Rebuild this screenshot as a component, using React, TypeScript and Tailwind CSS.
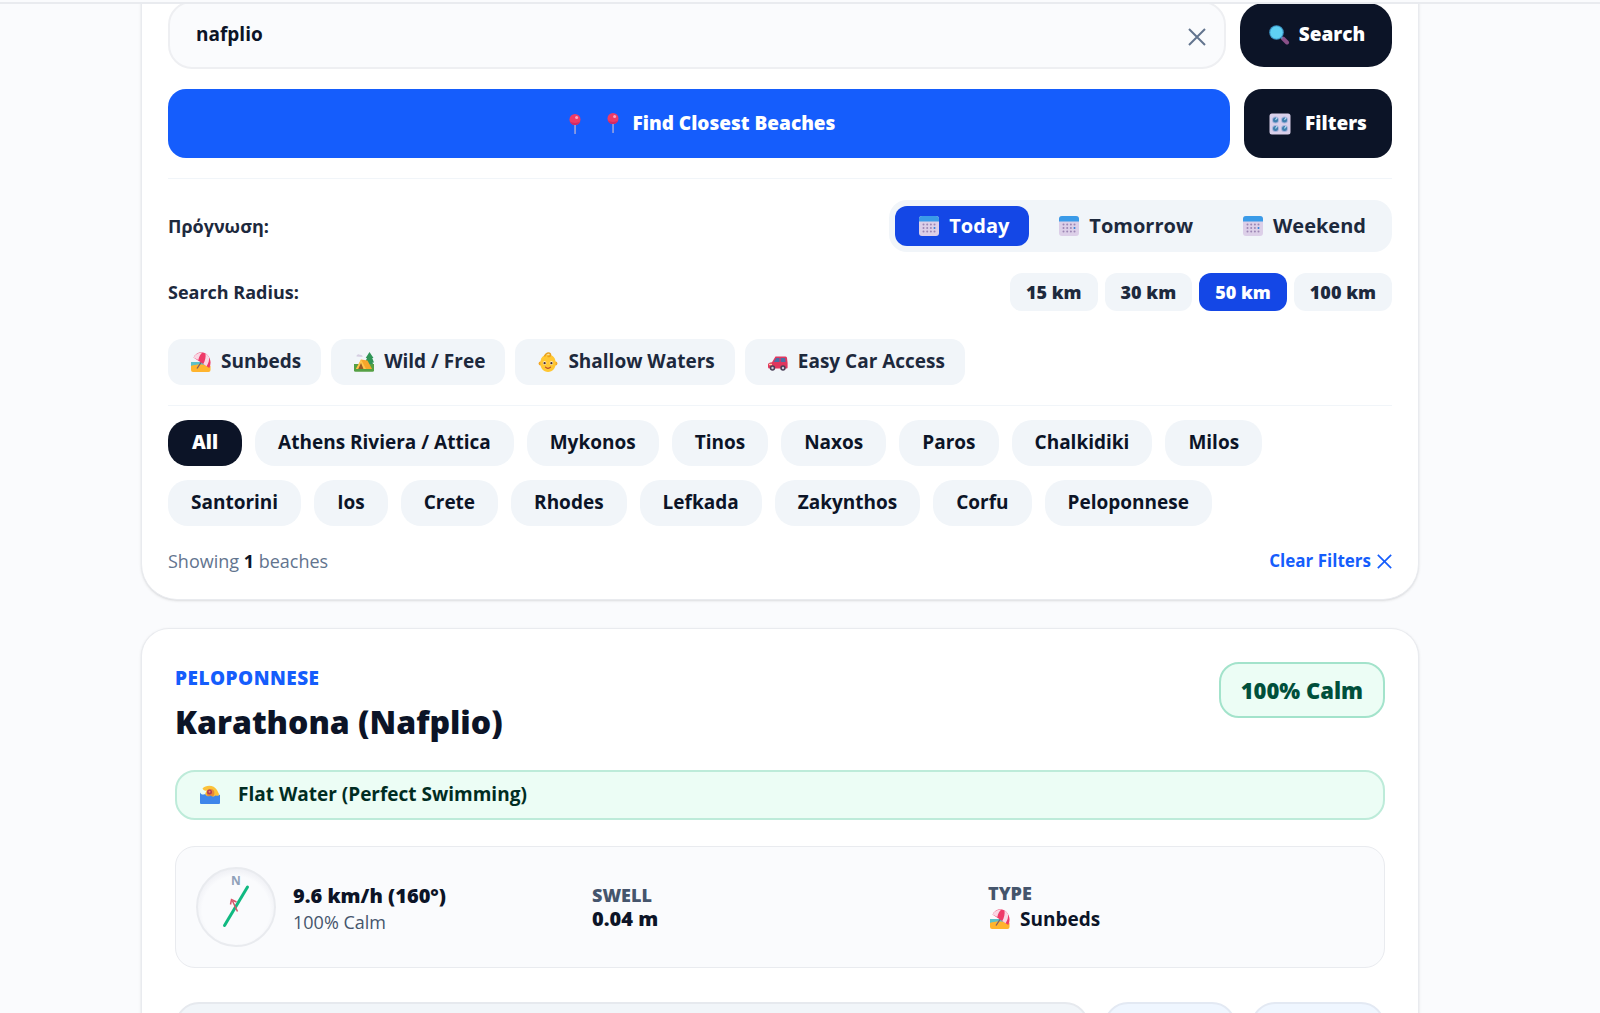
import React, { useState } from 'react';

const days = ['Today', 'Tomorrow', 'Weekend'];
const radii = [15, 30, 50, 100];
const regions = ['All', 'Athens Riviera / Attica', 'Mykonos', 'Tinos', 'Naxos', 'Paros', 'Chalkidiki', 'Milos', 'Santorini', 'Ios', 'Crete', 'Rhodes', 'Lefkada', 'Zakynthos', 'Corfu', 'Peloponnese'];

const PinIcon = () => <svg viewBox="0 0 20 20" className="h-5 w-6 shrink-0">
  <rect x="9.4" y="9" width="1.3" height="11" rx="0.6" fill="#b9b4d6" />
  <circle cx="10" cy="5.5" r="5.5" fill="#ee3a66" />
  <path d="M4.800 7.200a5.500 5.500 0 0 0 10.400 0c-2.600 2.200-7.600 2.300-10.400 0z" fill="#cf2a66" />
  <circle cx="11.600" cy="3.600" r="1.500" fill="#ffa3bd" />
</svg>;

const SearchIcon = () => <svg viewBox="0 0 20 20" className="h-5 w-6 shrink-0">
  <path d="M14 13.500l4 4" stroke="#8a5088" strokeWidth="4" strokeLinecap="round" />
  <path d="M11 11l2.500 2.500" stroke="#6b7fa8" strokeWidth="2" />
  <circle cx="7.500" cy="7.500" r="7.300" fill="#3b93c4" />
  <circle cx="7.500" cy="7.500" r="6.200" fill="#5fd0f3" />
</svg>;

const KnobsIcon = () => <svg viewBox="0 0 22 22" className="h-[22px] w-[22px] shrink-0">
  <rect x="0.500" y="0.500" width="21" height="21" rx="2.500" fill="#d9d0ea" />
  {[6.500, 15.500].map(x => [7, 15.500].map(y => <g key={`${x}-${y}`}>
    <circle cx={x} cy={y} r="3.500" fill="#a9b2dc" />
    <circle cx={x} cy={y} r="2.500" fill="#3f7fae" />
    <path d={`M${x} ${y}l1.500-2.400`} stroke="#b9e0f5" strokeWidth="1.100" />
  </g>))}
</svg>;

const CalendarIcon = () => <svg viewBox="0 0 20 20" className="h-5 w-6 shrink-0">
  <rect width="20" height="20" rx="3" fill="#dccfe8" />
  <path d="M0 5.500V3a3 3 0 0 1 3-3h14a3 3 0 0 1 3 3v2.500z" fill="#3a9be8" />
  {[8.500, 12, 15.500].map(y => [4.500, 8.200, 11.900, 15.500].map(x => <circle key={`${x}-${y}`} cx={x} cy={y} r="1" fill={x > 15 && y === 12 ? '#2f7fd8' : '#9c86b4'} />))}
</svg>;

const UmbrellaIcon = () => <svg viewBox="0 0 20 20" className="h-5 w-6 shrink-0">
  <path d="M0 10h18v4H0z" fill="#5cc0c9" />
  <path d="M0 14c5-2 12-2 19.500 0v4a2 2 0 0 1-2 2H2a2 2 0 0 1-2-2z" fill="#ffb42e" />
  <path d="M6 16.500l6-9" stroke="#7a5a6b" strokeWidth="1.300" />
  <path d="M2.500 5.500C5.500 0 12-1.500 16.500 3c3.500 4 3.800 8.500 1.800 13z" fill="#ee3a68" />
  <path d="M2.500 5.500C4.500 2 8 .300 11.500.500c-2 1.500-3.500 4-4.200 7.500z" fill="#f9d7e4" />
  <path d="M12.300 12C14.200 8.500 15 5 14.500 1.500c1.500.700 2.500 2 3.500 3.500.500 3-.500 6.500-2.500 9.300z" fill="#f9d7e4" />
</svg>;

const CampingIcon = () => <svg viewBox="0 0 20 20" className="h-5 w-6 shrink-0">
  <path d="M15.500 0l4 6h-1.300l1.800 4.500h-1.500L20 15h-9l1.500-4.500H11L13 6h-1.300z" fill="#2f9556" />
  <path d="M2.500 4.500a2 2 0 0 1 3.500-1.500 1.800 1.800 0 0 1 2.500 2z" fill="#d6cfe2" />
  <path d="M0 12h20v6.300a1.500 1.500 0 0 1-1.500 1.500h-17A1.500 1.500 0 0 1 0 18.300z" fill="#55a044" />
  <path d="M7 7.500l6.500 1L18 17H2z" fill="#f7a62b" />
  <path d="M7 7.500L2 17h10z" fill="#ffc64d" />
  <path d="M7 11l-2.800 6h5.300z" fill="#9a5a26" />
</svg>;

const BabyIcon = () => <svg viewBox="0 0 20 20" className="h-5 w-6 shrink-0">
  <circle cx="2.500" cy="11.500" r="1.900" fill="#f5a623" />
  <circle cx="17.500" cy="11.500" r="1.900" fill="#f5a623" />
  <path d="M10 2.600c5 0 7.700 3.700 7.700 8.700S14.500 20 10 20s-7.700-3.700-7.700-8.700S5 2.600 10 2.600z" fill="#ffc733" />
  <path d="M6.500 4.500C7.500 1 11 0 12.300 2c.800 1.800-1 3-2.800 2.300" fill="none" stroke="#eaa21d" strokeWidth="1.600" />
  <circle cx="6.600" cy="11" r="1.700" fill="#fff" /><circle cx="13.400" cy="11" r="1.700" fill="#fff" />
  <circle cx="6.600" cy="11.100" r="1.200" fill="#4b2f28" /><circle cx="13.400" cy="11.100" r="1.200" fill="#4b2f28" />
  <path d="M7.500 15.200c1.500 1.500 3.500 1.500 5 0" fill="none" stroke="#b5472b" strokeWidth="1.200" strokeLinecap="round" />
</svg>;

const CarIcon = () => <svg viewBox="0 0 20 20" className="h-5 w-6 shrink-0">
  <path d="M7.500 4.500h10a1.500 1.500 0 0 1 1.500 1.500l.600 5v4.500a1 1 0 0 1-1 1H1.500A1.500 1.500 0 0 1 0 15v-2.500c0-1.200 1.500-1.800 4-2.200z" fill="#e0365f" />
  <path d="M8.200 6h3.300v4H5.600zM12.700 6h4.300l.700 4h-5z" fill="#4c6fa5" />
  <path d="M1 12.500h3" stroke="#ffd3a0" strokeWidth="1.400" />
  <circle cx="4.500" cy="16" r="2.700" fill="#4a3f57" /><circle cx="4.500" cy="16" r="1.200" fill="#cfc6dc" />
  <circle cx="15" cy="16" r="2.700" fill="#4a3f57" /><circle cx="15" cy="16" r="1.200" fill="#cfc6dc" />
</svg>;

const SwimmerIcon = () => <svg viewBox="0 0 20 20" className="h-5 w-6 shrink-0">
  <path d="M2.500 3.500C6-.500 14-.500 17 5l2 4-1 5H4.500c0-4 .500-6 2.500-8.500-1.500.500-3.500 0-4.500-2z" fill="#fbc23a" />
  <circle cx="10.500" cy="8" r="3.900" fill="#e88b36" />
  <circle cx="9.500" cy="7" r="2.500" fill="#b03a5b" />
  <circle cx="9.500" cy="6.800" r="1" fill="#ee8f5a" />
  <path d="M0 7.500c1.500 2.500 3.500 2.500 5 1.500 1.500 2.500 4 3 5.500 1.500 1.500 1.500 3.500 1.500 5 0 1.500.500 3 .500 4.500-1V18a1 1 0 0 1-1 1H1a1 1 0 0 1-1-1z" fill="#3f86ea" />
</svg>;

const CrossIcon = ({ className }: { className: string }) => <svg viewBox="0 0 18 18" className={className} fill="none" stroke="currentColor" strokeWidth="2">
  <path d="M1 1l16 16M17 1L1 17" />
</svg>;

const Compass = () => <svg viewBox="0 0 80 80" className="h-20 w-20 shrink-0">
  <defs>
    <radialGradient id="dial" cx="50%" cy="54%" r="54%">
      <stop offset="80%" stopColor="#fafbfd" />
      <stop offset="100%" stopColor="#eeeff4" />
    </radialGradient>
  </defs>
  <circle cx="40" cy="40" r="39" fill="url(#dial)" stroke="#e9ebef" strokeWidth="2" />
  <text x="40" y="18" textAnchor="middle" fontSize="12" fontWeight="700" fill="#90a1b9">N</text>
  <path d="M28.500 58.500L51.500 20" stroke="#10b981" strokeWidth="3" strokeLinecap="round" />
  <path d="M41.500 44.500L36.500 34M34.500 37.500l1-5 5 2.500" stroke="#d9566a" strokeWidth="1.500" fill="none" />
</svg>;

const features = [
  { label: 'Sunbeds', Icon: UmbrellaIcon },
  { label: 'Wild / Free', Icon: CampingIcon },
  { label: 'Shallow Waters', Icon: BabyIcon },
  { label: 'Easy Car Access', Icon: CarIcon },
];

const App: React.FC = () => {
  const [query, setQuery] = useState('nafplio');
  const [day, setDay] = useState('Today');
  const [radius, setRadius] = useState(50);
  const [region, setRegion] = useState('All');
  return <div className="h-screen overflow-hidden bg-[#fafbfd] pr-10 font-['Open_Sans','Noto_Sans',sans-serif] text-lg text-[#0c1427]">
    <header className="absolute inset-x-0 top-0 z-10 h-1 border-b-2 border-[#e9ebef] bg-[#fafbfd]" />
    <main className="mx-auto max-w-[1278px]">
      {/* Search and filters */}
      <section className="rounded-b-[36px] border-x border-b border-[#e9ebef] bg-white px-[26px] pt-px pb-6 shadow-sm">
        <div className="flex items-center gap-[14px]">
          <div className="flex h-[68px] flex-1 items-center rounded-3xl border-2 border-[#eeeff2] bg-[#fafbfd] pr-[18px] pl-[26px]">
            <input type="text" aria-label="Search" value={query} onChange={e => setQuery(e.target.value)} className="min-w-0 flex-1 bg-transparent text-[19px] font-bold outline-none" />
            <button type="button" aria-label="Clear" onClick={() => setQuery('')} className="pt-1 text-slate-500">
              <CrossIcon className="h-[18px] w-[18px]" />
            </button>
          </div>
          <button type="button" className="flex h-16 w-[152px] items-center justify-center gap-2 rounded-3xl bg-[#0c1427] text-[19px] font-extrabold text-white">
            <SearchIcon />
            Search
          </button>
        </div>
        <div className="mt-5 flex gap-[14px]">
          <button type="button" className="flex h-[69px] flex-1 items-center justify-center rounded-[18px] bg-blue-600 text-[19px] font-extrabold text-white">
            <PinIcon />
            <span className="ml-[14px] flex items-center gap-2">
              <PinIcon />
              Find Closest Beaches
            </span>
          </button>
          <button type="button" className="flex h-[69px] w-[148px] items-center justify-center gap-[14px] rounded-[18px] bg-[#0c1427] text-[19px] font-extrabold text-white">
            <KnobsIcon />
            Filters
          </button>
        </div>
        {/* Forecast day */}
        <div className="mt-5 flex items-center justify-between border-t border-slate-100 pt-[21px]">
          <span className="font-bold text-slate-800">Πρόγνωση:</span>
          <div className="flex rounded-[18px] bg-slate-100 p-[6px]">
            {days.map(d => <button key={d} type="button" onClick={() => setDay(d)} className={`flex h-10 items-center gap-2 rounded-xl pr-5 text-xl font-bold ${day === d ? 'bg-blue-700 pl-[22px] text-white' : 'pl-7 text-slate-800'}`}>
              <CalendarIcon />
              {d}
            </button>)}
          </div>
        </div>
        {/* Search radius */}
        <div className="mt-[21px] flex items-center justify-between">
          <span className="font-bold text-slate-800">Search Radius:</span>
          <div className="flex gap-[7px]">
            {radii.map(r => <button key={r} type="button" onClick={() => setRadius(r)} className={`h-[38px] rounded-xl px-4 font-extrabold ${radius === r ? 'bg-blue-700 text-white' : 'bg-slate-100 text-slate-800'}`}>
              {r} km
            </button>)}
          </div>
        </div>
        {/* Beach features */}
        <div className="mt-7 flex flex-wrap gap-[10px]">
          {features.map(({ label, Icon }) => <button key={label} type="button" className="flex h-[46px] items-center gap-2 rounded-[14px] bg-slate-100 pr-5 pl-[21px] text-[19px] font-bold text-slate-800">
            <Icon />
            {label}
          </button>)}
        </div>
        {/* Regions */}
        <div className="mt-5 flex flex-wrap gap-x-[13px] gap-y-[14px] border-t border-slate-100 pt-[14px] text-[19px]">
          {regions.map(r => <button key={r} type="button" onClick={() => setRegion(r)} className={`h-[46px] rounded-[20px] ${region === r ? 'bg-[#0c1427] px-6 font-extrabold text-white' : 'bg-slate-100 px-[23px] font-bold text-[#0c1427]'}`}>
            {r}
          </button>)}
        </div>
        <div className="mt-[21px] flex items-center justify-between">
          <p className="text-slate-500">
            Showing <strong className="text-[#0c1427]">1</strong> beaches
          </p>
          <button type="button" className="flex items-center gap-[6px] text-[17px] font-bold text-blue-600">
            Clear Filters
            <CrossIcon className="h-[15px] w-[15px]" />
          </button>
        </div>
      </section>
      {/* Beach card */}
      <article className="mt-7 rounded-t-[28px] border-x border-t border-[#e9ebef] bg-white px-[33px] pt-[33px] shadow-sm">
        <div className="flex items-start justify-between">
          <div className="pt-[2px]">
            <p className="text-[19px] leading-7 font-extrabold tracking-wide text-blue-600">PELOPONNESE</p>
            <h2 className="mt-[6px] text-[32px] leading-[48px] font-extrabold">Karathona (Nafplio)</h2>
          </div>
          <span className="flex h-14 items-center rounded-[20px] border-2 border-[#a3e3cb] bg-emerald-50 px-5 text-[22px] font-extrabold text-emerald-900">100% Calm</span>
        </div>
        <div className="mt-6 flex h-[50px] items-center gap-4 rounded-[20px] border-2 border-[#bdebd9] bg-emerald-50 px-[21px] text-[19px] font-bold text-emerald-950">
          <SwimmerIcon />
          Flat Water (Perfect Swimming)
        </div>
        <div className="mt-[26px] grid grid-cols-3 items-center gap-5 rounded-[20px] border border-[#e9ebef] bg-[#fafbfd] p-5">
          <div className="flex items-center gap-[17px]">
            <Compass />
            <div className="pt-[6px]">
              <p className="text-xl leading-6 font-extrabold">9.6 km/h (160°)</p>
              <p className="leading-7 text-slate-600">100% Calm</p>
            </div>
          </div>
          <div>
            <p className="leading-6 font-extrabold text-slate-600">SWELL</p>
            <p className="text-xl leading-6 font-extrabold">0.04 m</p>
          </div>
          <div>
            <p className="leading-6 font-extrabold text-slate-600">TYPE</p>
            <p className="flex items-center gap-2 text-[19px] leading-7 font-bold">
              <UmbrellaIcon />
              Sunbeds
            </p>
          </div>
        </div>
        <div className="mt-[34px] flex gap-[15px]">
          <button type="button" className="h-16 flex-1 rounded-3xl border-2 border-[#e6e9ee] bg-slate-100" />
          <button type="button" className="h-16 w-[132px] rounded-3xl border-2 border-[#e3e9f3] bg-blue-50" />
          <button type="button" className="h-16 w-[134px] rounded-3xl border-2 border-[#e3e9f3] bg-blue-50" />
        </div>
      </article>
    </main>
  </div>;
};
export default App;
